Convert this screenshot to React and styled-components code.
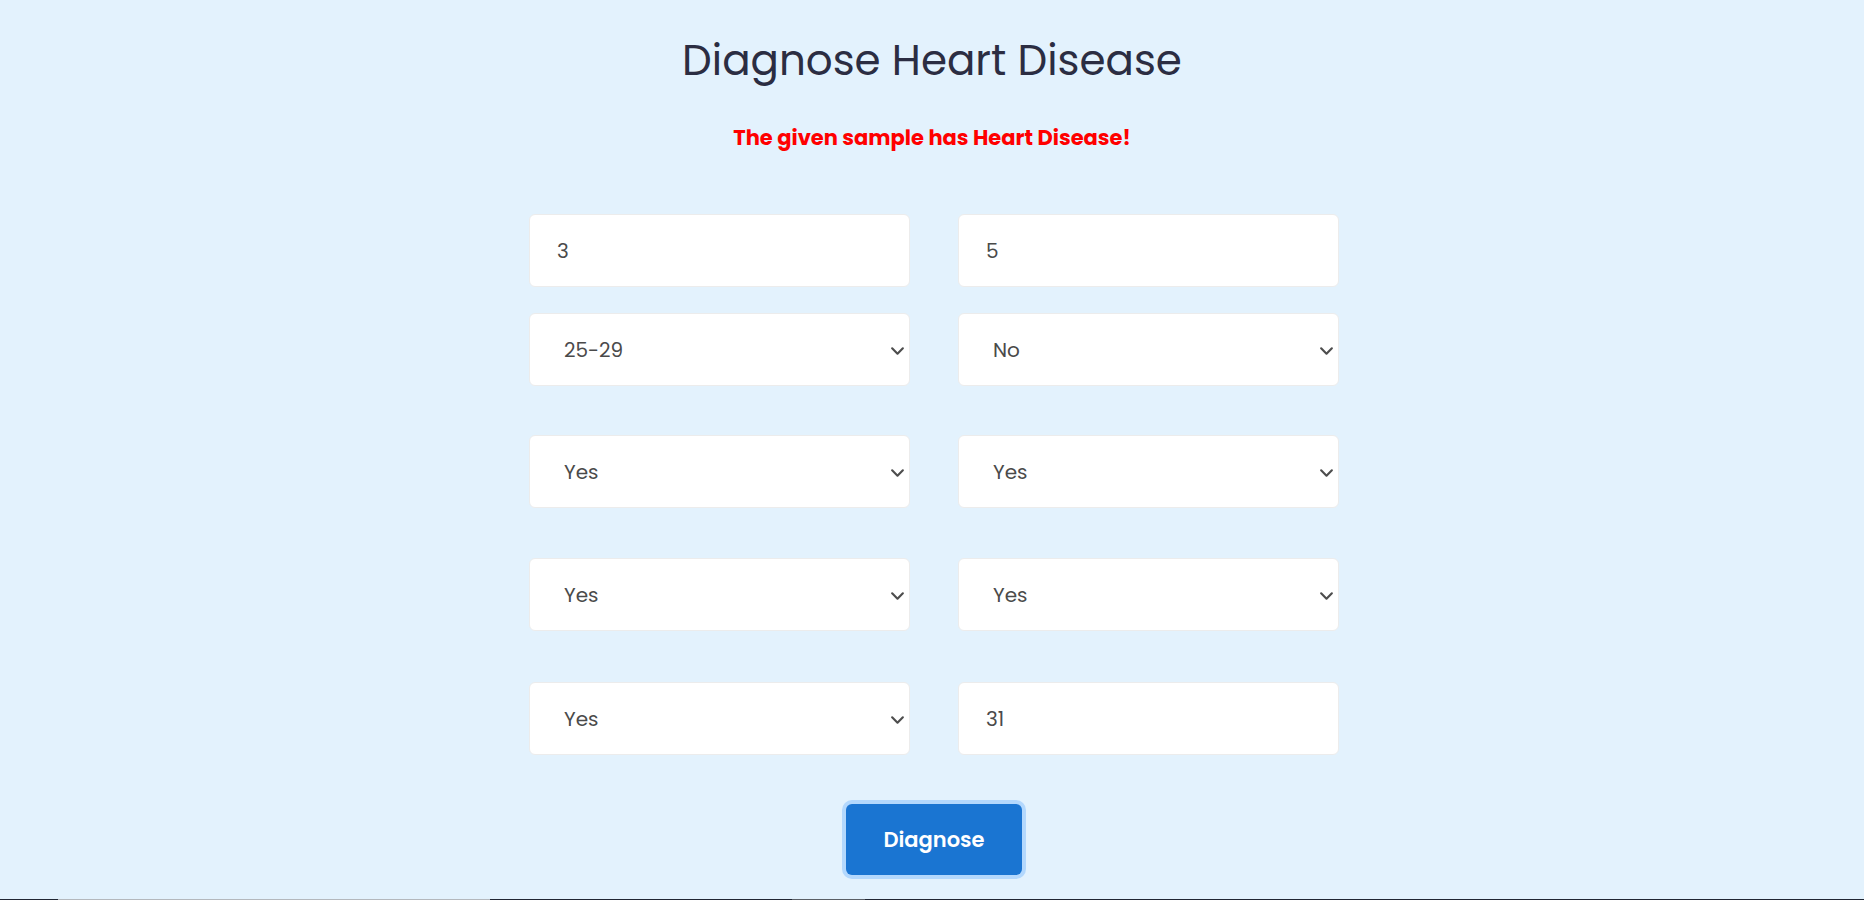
import styled, { createGlobalStyle } from 'styled-components'

const GlobalStyle = createGlobalStyle`
	html, body {
		margin: 0;
		padding: 0;
		background: #e3f2fd;
		font-family: "Poppins", "Open Sans", "DejaVu Sans", sans-serif;
	}
	* {
		box-sizing: border-box;
	}
`

const StyledPage = styled.main`
	min-height: 900px;
	display: flex;
	flex-direction: column;
	align-items: center;
	padding-top: 33px;
`

const StyledTitle = styled.h1`
	margin: 0;
	font-size: 42px;
	font-weight: 400;
	line-height: 55px;
	color: #2b2d42;
`

const StyledResult = styled.p`
	margin: 36px 0 0;
	font-size: 21px;
	font-weight: 700;
	line-height: 28px;
	color: #ff0000;
`

const StyledForm = styled.form`
	width: 810px;
	margin: 62px 0 0 4px;
	display: flex;
	flex-direction: column;
	align-items: center;
`

const StyledRow = styled.div`
	width: 100%;
	display: grid;
	grid-template-columns: 381px 381px;
	column-gap: 48px;
	margin-top: ${ props => props.$spacing }px;
`

const StyledInput = styled.input`
	width: 100%;
	height: 73px;
	padding: 0 27px;
	border: 1px solid #ececec;
	border-radius: 6px;
	background: #fff;
	font-family: inherit;
	font-size: 20px;
	color: #4a4a4a;
	outline: none;
`

const StyledSelectWrap = styled.div`
	position: relative;
	& > svg {
		position: absolute;
		right: 5px;
		top: 50%;
		width: 15px;
		height: 15px;
		margin-top: -7px;
		pointer-events: none;
	}
`

const StyledSelect = styled.select`
	width: 100%;
	height: 73px;
	padding: 0 30px 0 34px;
	border: 1px solid #ececec;
	border-radius: 6px;
	background: #fff;
	font-family: inherit;
	font-size: 20px;
	color: #4a4a4a;
	appearance: none;
	-webkit-appearance: none;
	outline: none;
`

const StyledButton = styled.button`
	margin-top: 49px;
	width: 176px;
	height: 71px;
	border: none;
	border-radius: 6px;
	background: #1a75d2;
	box-shadow: 0 0 0 4px #b3d8fd;
	font-family: inherit;
	font-size: 21px;
	font-weight: 600;
	color: #fff;
	cursor: pointer;
`

const StyledTaskbar = styled.div`
	position: fixed;
	left: 0;
	right: 0;
	bottom: 0;
	height: 1px;
	display: flex;
	background: #202633;
`

const StyledSegment = styled.span`
	display: block;
	margin-left: ${ props => props.$offset }px;
	width: ${ props => props.$width }px;
	background: ${ props => props.$color };
`

function Chevron () {
	return (
		<svg viewBox="0 0 14 14" fill="none" stroke="#4d4d4d" strokeWidth="2" strokeLinecap="round" strokeLinejoin="round">
			<path d="M2 5l5 5 5-5" />
		</svg>
	)
}

function Choice ({ value, options }) {
	return (
		<StyledSelectWrap>
			<StyledSelect defaultValue={ value }>
				{ options.map(option => <option key={ option }>{ option }</option>) }
			</StyledSelect>
			<Chevron />
		</StyledSelectWrap>
	)
}

const yesNo = ['Yes', 'No']
const ages = ['18-24', '25-29', '30-34', '35-39', '40-44', '45-49', '50-54', '55-59', '60-64', '65-69', '70-74', '75-79', '80 or older']

function App () {
	return (
		<>
			<GlobalStyle />
			<StyledPage>
				<StyledTitle>Diagnose Heart Disease</StyledTitle>
				<StyledResult>The given sample has Heart Disease!</StyledResult>
				<StyledForm onSubmit={ e => e.preventDefault() }>
					<StyledRow $spacing={ 0 }>
						<StyledInput type="text" defaultValue="3" />
						<StyledInput type="text" defaultValue="5" />
					</StyledRow>
					<StyledRow $spacing={ 26 }>
						<Choice value="25-29" options={ ages } />
						<Choice value="No" options={ yesNo } />
					</StyledRow>
					<StyledRow $spacing={ 49 }>
						<Choice value="Yes" options={ yesNo } />
						<Choice value="Yes" options={ yesNo } />
					</StyledRow>
					<StyledRow $spacing={ 50 }>
						<Choice value="Yes" options={ yesNo } />
						<Choice value="Yes" options={ yesNo } />
					</StyledRow>
					<StyledRow $spacing={ 51 }>
						<Choice value="Yes" options={ yesNo } />
						<StyledInput type="text" defaultValue="31" />
					</StyledRow>
					<StyledButton type="submit">Diagnose</StyledButton>
				</StyledForm>
			</StyledPage>
			<StyledTaskbar>
				<StyledSegment $offset={ 58 } $width={ 432 } $color="#b4b8bd" />
				<StyledSegment $offset={ 302 } $width={ 73 } $color="#5a5f66" />
			</StyledTaskbar>
		</>
	)
}

export default App
